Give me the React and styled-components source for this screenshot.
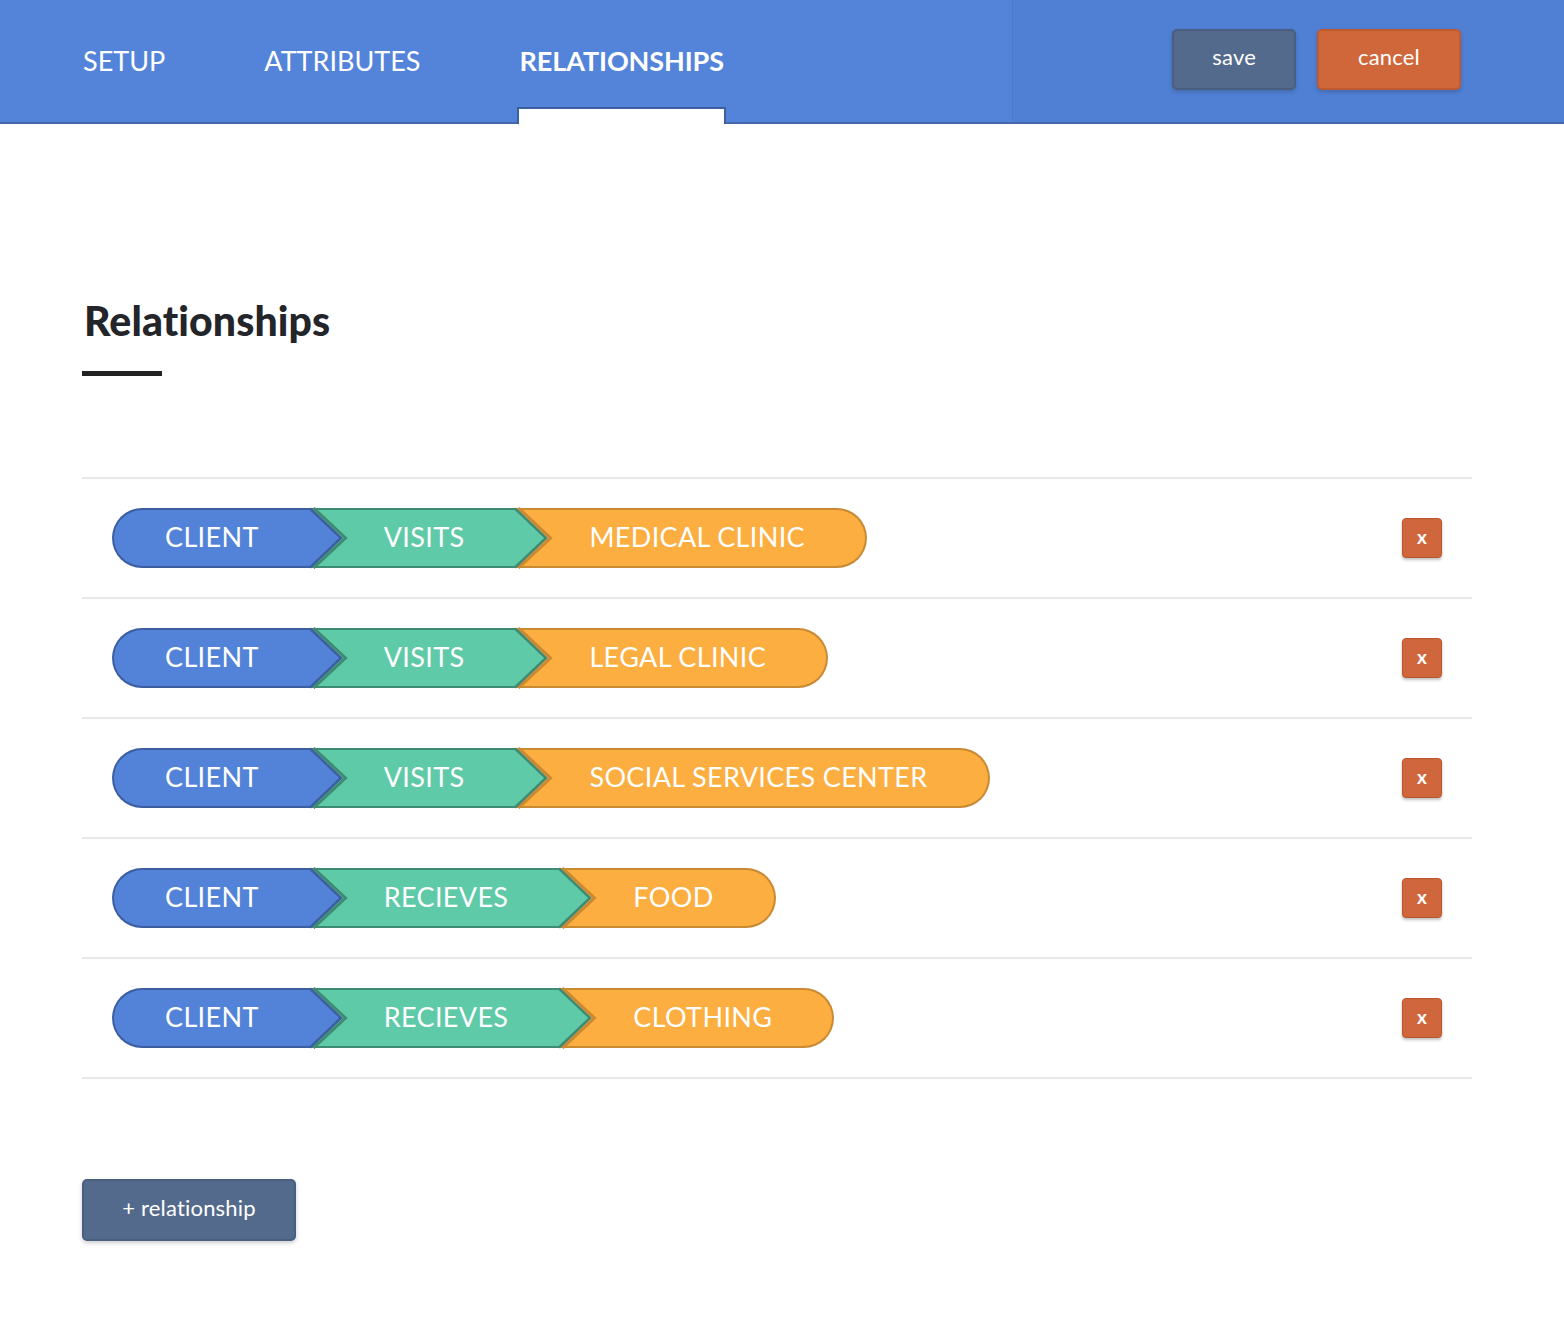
import React from "react";
import styled, { createGlobalStyle } from "styled-components";

const FONT = `"Lato", "Liberation Sans", Arial, sans-serif`;

const Global = createGlobalStyle`
  html, body { margin: 0; padding: 0; background: #fff; }
  body { font-family: ${FONT}; -webkit-font-smoothing: antialiased; }
  * { box-sizing: border-box; }
`;

const Header = styled.header`
  display: flex;
  height: 124px;
  background: #5384d9;
  border-bottom: 2px solid #4466aa;
`;

const Nav = styled.nav`
  width: 1013px;
  display: flex;
  align-items: center;
  gap: 99px;
  padding-left: 83px;
  border-right: 1px solid #4c78c6;
`;

const Tab = styled.div`
  position: relative;
  height: 100%;
  display: flex;
  align-items: center;
  padding-bottom: 2px;
  color: #fff;
  font-size: 27px;
  font-weight: ${(p) => (p.$active ? 700 : 400)};
  letter-spacing: ${(p) => (p.$active ? "-0.1px" : "0")};
`;

const TabIndicator = styled.span`
  position: absolute;
  left: -3px;
  right: -2px;
  bottom: -2px;
  height: 17px;
  background: #fff;
  border: 2px solid #3d5fa0;
  border-bottom: none;
`;

const Actions = styled.div`
  flex: 1;
  display: flex;
  align-items: center;
  justify-content: flex-end;
  gap: 21px;
  padding: 0 103px 4px 0;
  background: #5080d4;
`;

const HeaderButton = styled.button`
  height: 61px;
  padding: 0 ${(p) => p.$pad}px 5px;
  border-radius: 5px;
  border: 2px solid ${(p) => p.$border};
  background: ${(p) => p.$bg};
  color: #fff;
  font-family: ${FONT};
  font-size: 22px;
  letter-spacing: 0.2px;
  box-shadow: 0 2px 4px rgba(0, 0, 0, 0.18);
  cursor: pointer;
`;

const Main = styled.main`
  padding: 172px 92px 80px 82px;
`;

const Title = styled.h1`
  margin: 0 0 0 2px;
  font-size: 41px;
  font-weight: 900;
  color: #23252a;
  line-height: 50px;
  letter-spacing: 0.1px;
`;

const TitleBar = styled.div`
  width: 80px;
  height: 5px;
  background: #222;
  margin-top: 25px;
`;

const List = styled.div`
  margin-top: 101px;
  border-bottom: 2px solid #e8e8e8;
`;

const Row = styled.div`
  display: flex;
  align-items: center;
  justify-content: space-between;
  padding: 29px 30px 29px 30px;
  border-top: 2px solid #e8e8e8;
`;

const Chip = styled.div`
  display: flex;
  height: 60px;
`;

const Segment = styled.div`
  position: relative;
  z-index: ${(p) => p.$z};
  display: flex;
  align-items: center;
  height: 60px;
  padding: 0 ${(p) => p.$pr}px 3px ${(p) => p.$pl}px;
  background: ${(p) => p.$bg};
  border-top: 2px solid ${(p) => p.$dark};
  border-bottom: 2px solid ${(p) => p.$dark};
  border-left: ${(p) => (p.$first ? `2px solid ${p.$dark}` : "none")};
  border-right: ${(p) => (p.$last ? `2px solid ${p.$dark}` : "none")};
  border-radius: ${(p) =>
    p.$first ? "30px 0 0 30px" : p.$last ? "0 30px 30px 0" : "0"};
  color: #fff;
  font-size: 27px;
  white-space: nowrap;
  letter-spacing: 0.35px;
`;

const TipSvg = styled.svg`
  position: absolute;
  left: 100%;
  top: -2px;
  width: 36px;
  height: 60px;
  overflow: visible;
`;

const RemoveButton = styled.button`
  width: 40px;
  height: 40px;
  border-radius: 4px;
  border: 1px solid #b9552f;
  background: #d0663b;
  color: #fff;
  font-family: ${FONT};
  font-size: 19px;
  font-weight: 700;
  line-height: 1;
  padding: 0 0 3px;
  box-shadow: 0 2px 3px rgba(0, 0, 0, 0.25);
  cursor: pointer;
`;

const AddButton = styled.button`
  margin-top: 100px;
  width: 214px;
  height: 62px;
  padding: 0 0 6px;
  border-radius: 5px;
  border: 2px solid #4a5f80;
  background: #536a8c;
  color: #fff;
  font-family: ${FONT};
  font-size: 22px;
  letter-spacing: 0.2px;
  box-shadow: 0 2px 4px rgba(0, 0, 0, 0.2);
  cursor: pointer;
`;

const KIND = {
  subject: { bg: "#5283d9", dark: "#3e5f9f" },
  verb: { bg: "#5ecaa7", dark: "#3f8a73" },
  object: { bg: "#fcae40", dark: "#c98a33" },
};

function Tip({ bg, dark, nextDark }) {
  return (
    <TipSvg viewBox="0 0 36 60">
      <polyline
        points="0,0 32,30 0,60"
        fill="none"
        stroke={nextDark}
        strokeWidth="3"
        transform="translate(2.5,0)"
      />
      <polygon points="-1,1 30,30 -1,59" fill={bg} />
      <polyline points="-1,0.5 30,30 -1,59.5" fill="none" stroke={dark} strokeWidth="2.5" />
    </TipSvg>
  );
}

const rows = [
  ["CLIENT", "VISITS", "MEDICAL CLINIC"],
  ["CLIENT", "VISITS", "LEGAL CLINIC"],
  ["CLIENT", "VISITS", "SOCIAL SERVICES CENTER"],
  ["CLIENT", "RECIEVES", "FOOD"],
  ["CLIENT", "RECIEVES", "CLOTHING"],
];

function RelationshipChip({ parts }) {
  const kinds = ["subject", "verb", "object"];
  return (
    <Chip>
      {parts.map((text, i) => {
        const k = KIND[kinds[i]];
        const first = i === 0;
        const last = i === parts.length - 1;
        const next = !last ? KIND[kinds[i + 1]] : null;
        return (
          <Segment
            key={i}
            $z={3 - i}
            $bg={k.bg}
            $dark={k.dark}
            $first={first}
            $last={last}
            $pl={first ? 51 : 73}
            $pr={last ? 60 : 52}
          >
            {text}
            {!last && <Tip bg={k.bg} dark={k.dark} nextDark={next.dark} />}
          </Segment>
        );
      })}
    </Chip>
  );
}

export default function App() {
  return (
    <>
      <Global />
      <Header>
        <Nav>
          <Tab>SETUP</Tab>
          <Tab>ATTRIBUTES</Tab>
          <Tab $active>
            RELATIONSHIPS
            <TabIndicator />
          </Tab>
        </Nav>
        <Actions>
          <HeaderButton $bg="#536a8c" $border="#4a5e7f" $pad={38}>
            save
          </HeaderButton>
          <HeaderButton $bg="#d0673b" $border="#c05a31" $pad={39}>
            cancel
          </HeaderButton>
        </Actions>
      </Header>
      <Main>
        <Title>Relationships</Title>
        <TitleBar />
        <List>
          {rows.map((r, i) => (
            <Row key={i}>
              <RelationshipChip parts={r} />
              <RemoveButton>x</RemoveButton>
            </Row>
          ))}
        </List>
        <AddButton>+ relationship</AddButton>
      </Main>
    </>
  );
}
